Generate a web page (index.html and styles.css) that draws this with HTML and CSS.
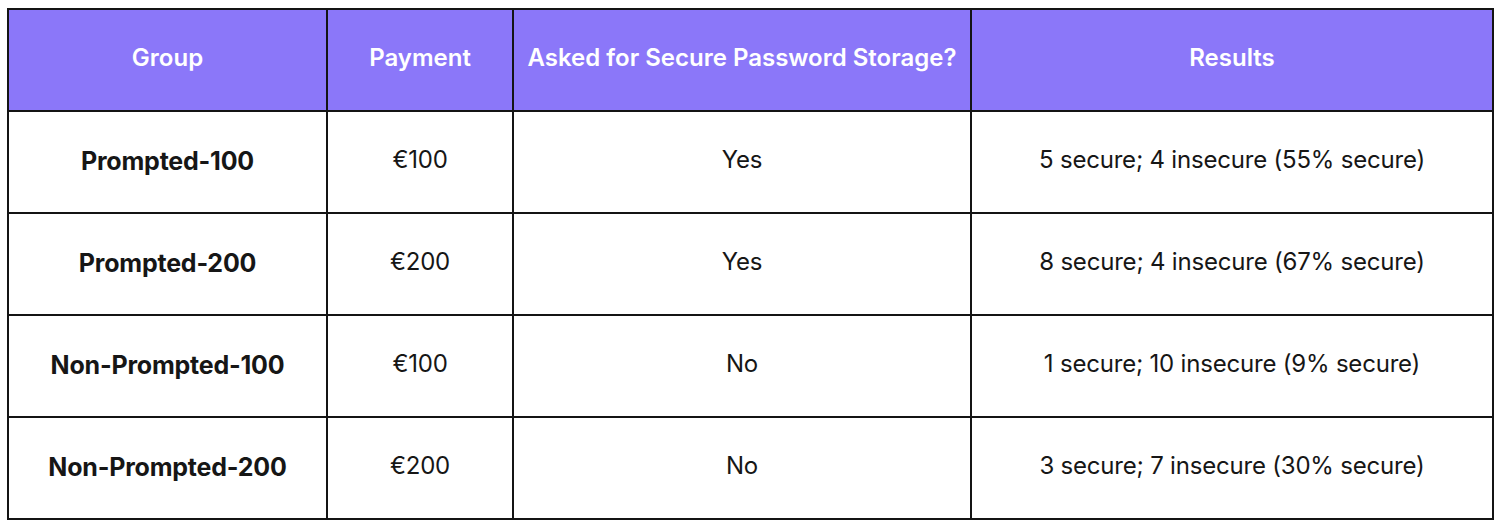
FILE: index.html
```html
<!DOCTYPE html>
<html lang="en">
<head>
<meta charset="utf-8">
<title>Password storage study results</title>
<link rel="stylesheet" href="styles.css">
</head>
<body>
<table class="results">
  <colgroup>
    <col class="c-group">
    <col class="c-pay">
    <col class="c-ask">
    <col class="c-res">
  </colgroup>
  <thead>
    <tr>
      <th>Group</th>
      <th>Payment</th>
      <th>Asked for Secure Password Storage?</th>
      <th>Results</th>
    </tr>
  </thead>
  <tbody>
    <tr>
      <td class="name">Prompted-100</td>
      <td>€100</td>
      <td>Yes</td>
      <td>5 secure; 4 insecure (55% secure)</td>
    </tr>
    <tr>
      <td class="name">Prompted-200</td>
      <td>€200</td>
      <td>Yes</td>
      <td>8 secure; 4 insecure (67% secure)</td>
    </tr>
    <tr>
      <td class="name">Non-Prompted-100</td>
      <td>€100</td>
      <td>No</td>
      <td>1 secure; 10 insecure (9% secure)</td>
    </tr>
    <tr>
      <td class="name">Non-Prompted-200</td>
      <td>€200</td>
      <td>No</td>
      <td>3 secure; 7 insecure (30% secure)</td>
    </tr>
  </tbody>
</table>
</body>
</html>
```
FILE: styles.css
```css
html, body {
  background: #ffffff;
}
body {
  margin: 0;
  padding: 8px 0 0 7px;
  font-family: Inter, "Noto Sans", sans-serif;
  color: #161616;
}
.results {
  border-collapse: collapse;
  width: 1485px;
  table-layout: fixed;
}
.c-group { width: 319px; }
.c-pay { width: 186px; }
.c-ask { width: 458px; }
.c-res { width: 522px; }
.results th,
.results td {
  border: 2px solid #141414;
  height: 97px;
  padding: 0 0 3px;
  text-align: center;
  vertical-align: middle;
  font-size: 24px;
  line-height: 1.2;
}
.results th {
  background: #8b77f9;
  color: #ffffff;
  font-weight: 600;
}
.results td {
  font-weight: 400;
  letter-spacing: -0.2px;
}
.results td.name {
  font-size: 25px;
  font-weight: 700;
}
```
